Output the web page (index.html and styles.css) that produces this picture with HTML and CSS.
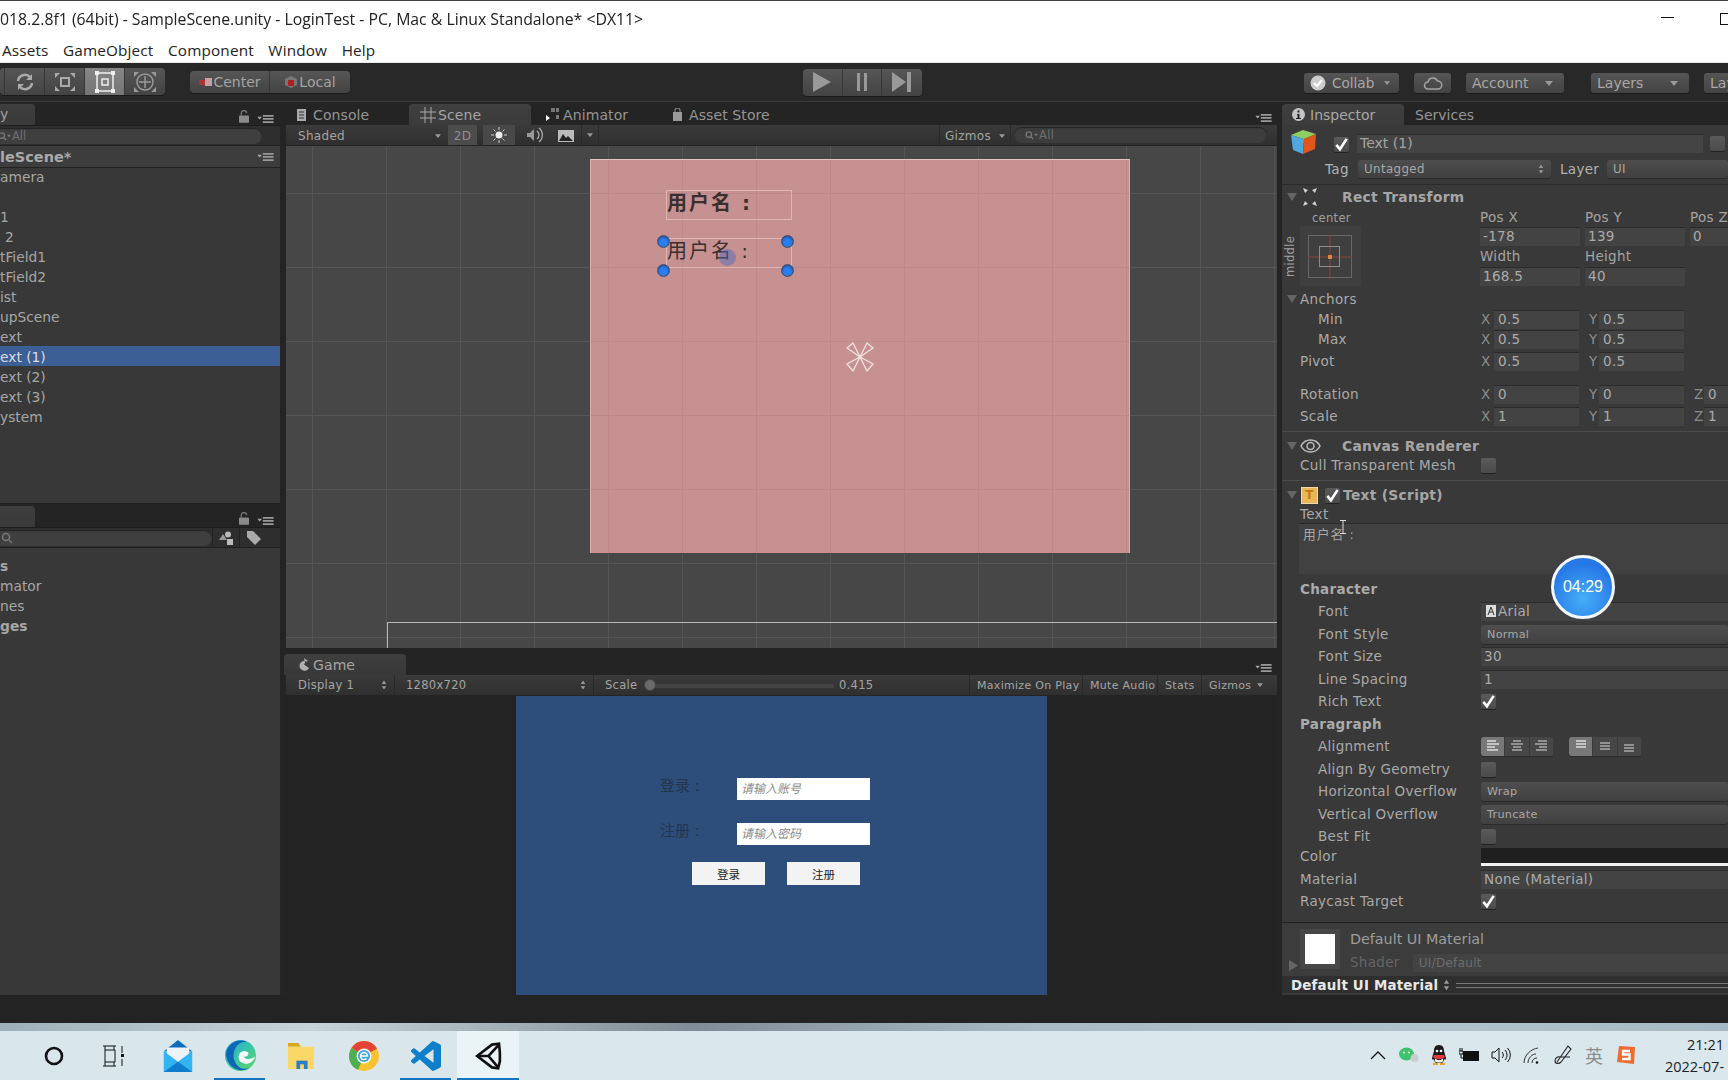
FILE: index.html
```html
<!DOCTYPE html>
<html lang="zh">
<head>
<meta charset="utf-8">
<title>Unity Editor</title>
<link rel="stylesheet" href="styles.css">
</head>
<body>
<svg class="sprite" width="0" height="0">
  <symbol id="i-menu" viewBox="0 0 18 10"><path d="M0 3h5L2.500 6z" fill="#aaa"/><path d="M6 1h12v2H6zM6 4.500h12v2H6zM6 8h12v2H6z" fill="#999"/></symbol>
  <symbol id="i-lock" viewBox="0 0 11 14"><path d="M2.500 6V3.500a3 3 0 0 1 6 0" fill="none" stroke="#777" stroke-width="1.500"/><rect y="6" width="11" height="8" rx="1" fill="#8a8a8a"/></symbol>
  <symbol id="i-check" viewBox="0 0 16 16"><path d="M2.500 8.500l3.800 4.500L13.500 2" fill="none" stroke="#fff" stroke-width="2.800"/></symbol>
  <symbol id="i-tri" viewBox="0 0 10 10"><path d="M0 1h10L5 9z" fill="#666"/></symbol>
  <symbol id="i-updown" viewBox="0 0 8 12"><path d="M4 0l3 4.500H1zM4 12L1 7.500h6z" fill="#999"/></symbol>
  <symbol id="i-down" viewBox="0 0 8 5"><path d="M0 0h8L4 5z" fill="#999"/></symbol>
  <symbol id="i-mag" viewBox="0 0 14 10"><circle cx="4" cy="4" r="3" fill="none" stroke="#777" stroke-width="1.500"/><path d="M6 6l3 3" stroke="#777" stroke-width="1.500"/><path d="M10 3h4l-2 3z" fill="#777"/></symbol>
</svg>

<header class="titlebar">
  <div class="title-row">
    <span class="title-text">018.2.8f1 (64bit) - SampleScene.unity - LoginTest - PC, Mac &amp; Linux Standalone* &lt;DX11&gt;</span>
    <span class="win-min"></span>
    <span class="win-max"></span>
  </div>
  <nav class="menu-row">
    <span class="menu-assets">Assets</span><span>GameObject</span><span>Component</span><span>Window</span><span>Help</span>
  </nav>
</header>

<div class="toolbar">
  <div class="btn-group tools">
    <span class="tool tool-stub"></span>
    <span class="tool"><svg width="22" height="22" viewBox="0 0 22 22"><path d="M4 10a7 7 0 0 1 12-4M18 12a7 7 0 0 1-12 4" fill="none" stroke="#aaa" stroke-width="2.500"/><path d="M18 3v6h-6zM4 19v-6h6z" fill="#aaa"/></svg></span>
    <span class="tool"><svg width="24" height="22" viewBox="0 0 24 22"><rect x="8" y="7" width="8" height="8" fill="none" stroke="#aaa" stroke-width="2"/><path d="M2 2h5L2 7zM22 2h-5l5 5zM2 20h5l-5-5zM22 20h-5l5-5z" fill="#aaa"/></svg></span>
    <span class="tool tool-on"><svg width="22" height="24" viewBox="0 0 22 24"><rect x="3" y="3" width="16" height="18" fill="none" stroke="#f0f0f0" stroke-width="1.500"/><rect x="8" y="9" width="6" height="6" fill="none" stroke="#eee" stroke-width="1.500"/><path d="M1 1h4v4H1zM17 1h4v4h-4zM1 19h4v4H1zM17 19h4v4h-4z" fill="#eee"/></svg></span>
    <span class="tool"><svg width="26" height="24" viewBox="0 0 26 24"><circle cx="13" cy="12" r="8" fill="none" stroke="#999" stroke-width="1.500"/><path d="M13 6v12M7 12h12" stroke="#999" stroke-width="1.500"/><path d="M2 2h5L2 7zM24 2h-5l5 5zM2 22h5l-5-5zM24 22h-5l5-5z" fill="#999"/></svg></span>
  </div>
  <div class="btn-group pivot">
    <span class="pivot-btn"><svg width="14" height="10" viewBox="0 0 14 10"><rect x="7" y="1" width="7" height="8" fill="#c4a0a0"/><rect x="1" y="3" width="6" height="5" fill="#a33"/></svg>Center</span>
    <span class="pivot-btn"><svg width="14" height="14" viewBox="0 0 14 14"><path d="M7 1l6 3v6l-6 3-6-3V4z" fill="#777"/><path d="M4 5h6v6H4z" fill="#a22"/></svg>Local</span>
  </div>
  <div class="btn-group play">
    <span class="play-btn"><svg width="18" height="20" viewBox="0 0 18 20"><path d="M0 0l18 10L0 20z" fill="#999"/></svg></span>
    <span class="play-btn"><svg width="12" height="18" viewBox="0 0 12 18"><path d="M1 0h3v18H1zM8 0h3v18H8z" fill="#999"/></svg></span>
    <span class="play-btn"><svg width="19" height="20" viewBox="0 0 19 20"><path d="M0 0l14 10L0 20z" fill="#999"/><path d="M15 0h4v20h-4z" fill="#999"/></svg></span>
  </div>
  <div class="top-right">
    <span class="tb-btn collab"><svg width="16" height="16" viewBox="0 0 16 16"><circle cx="8" cy="8" r="7.500" fill="#ccc"/><path d="M4 8l3 3 5-6" fill="none" stroke="#fff" stroke-width="2"/></svg>Collab<svg class="drop" width="6" height="4"><use href="#i-down"/></svg></span>
    <span class="tb-btn cloud"><svg width="20" height="13" viewBox="0 0 20 13"><path d="M5 12a3.500 3.500 0 0 1 0-7 5 5 0 0 1 9.500-1A4 4 0 0 1 15 12z" fill="none" stroke="#a4a4a4" stroke-width="1.500"/></svg></span>
    <span class="tb-btn account">Account<svg class="drop" width="8" height="5"><use href="#i-down"/></svg></span>
    <span class="tb-btn layers">Layers<svg class="drop" width="8" height="5"><use href="#i-down"/></svg></span>
    <span class="tb-btn layout">Layout</span>
  </div>
</div>

<main class="workspace">
  <aside class="left-col">
    <section class="hier">
      <div class="tabbar">
        <span class="tab tab-hier">y</span>
        <span class="tab-tools"><svg width="10" height="13"><use href="#i-lock"/></svg><svg width="17" height="9"><use href="#i-menu"/></svg></span>
      </div>
      <div class="search-row"><div class="search-pill"><svg class="mag" width="13" height="9"><use href="#i-mag"/></svg><span class="search-all">All</span></div></div>
      <div class="scene-head"><span>leScene*</span><svg width="17" height="9"><use href="#i-menu"/></svg></div>
      <ul class="tree hier-tree">
        <li>amera</li>
        <li></li>
        <li>1</li>
        <li class="indent">2</li>
        <li>tField1</li>
        <li>tField2</li>
        <li>ist</li>
        <li>upScene</li>
        <li>ext</li>
        <li class="selected">ext (1)</li>
        <li>ext (2)</li>
        <li>ext (3)</li>
        <li>ystem</li>
      </ul>
    </section>
    <section class="project">
      <div class="tabbar">
        <span class="tab tab-proj"></span>
        <span class="tab-tools"><svg width="10" height="13"><use href="#i-lock"/></svg><svg width="17" height="9"><use href="#i-menu"/></svg></span>
      </div>
      <div class="proj-search">
        <div class="search-pill proj-pill"><svg width="12" height="12" viewBox="0 0 12 12"><circle cx="5" cy="5" r="3.500" fill="none" stroke="#777" stroke-width="1.500"/><path d="M8 8l3 3" stroke="#777" stroke-width="1.500"/></svg></div>
        <span class="proj-icon"><svg width="15" height="14" viewBox="0 0 15 14"><path d="M0 9l4-6 4 6z" fill="#999"/><circle cx="9" cy="3.500" r="3" fill="#bbb"/><rect x="8" y="8" width="6" height="6" fill="#bbb"/></svg></span>
        <span class="proj-icon"><svg width="15" height="15" viewBox="0 0 15 15"><path d="M1 1h6l8 8-6 6-8-8z" fill="#aaa"/></svg></span>
      </div>
      <ul class="tree proj-tree">
        <li class="strong">s</li>
        <li>mator</li>
        <li>nes</li>
        <li class="strong">ges</li>
      </ul>
    </section>
  </aside>

  <div class="center-col">
    <div class="tabbar center-tabs">
      <span class="ctab ctab-console"><svg width="9" height="12" viewBox="0 0 9 12"><rect width="9" height="12" fill="#aaa"/><path d="M2 3h5M2 6h5M2 9h5" stroke="#333"/></svg>Console</span>
      <span class="ctab ctab-scene"><svg width="16" height="16" viewBox="0 0 16 16"><path d="M5 0v16M11 0v16M0 5h16M0 11h16" stroke="#aaa"/></svg>Scene</span>
      <span class="ctab ctab-anim"><svg width="13" height="13" viewBox="0 0 13 13"><path d="M5 0h4v4H5zM10 0h3v4h-3zM10 7h3v4h-3z" fill="#777"/><path d="M0 7v6l4-3z" fill="#fff"/></svg>Animator</span>
      <span class="ctab ctab-store"><svg width="9" height="13" viewBox="0 0 9 13"><path d="M2 4V2a2.500 2 0 0 1 5 0v2" fill="none" stroke="#999"/><rect y="4" width="9" height="9" fill="#999"/></svg>Asset Store</span>
      <svg class="center-menu" width="17" height="9"><use href="#i-menu"/></svg>
    </div>
    <div class="subbar scene-bar">
      <span class="sb-item shaded">Shaded<svg width="6" height="4"><use href="#i-down"/></svg></span>
      <span class="sb-item twod">2D</span>
      <span class="sb-item sun"><svg width="18" height="18" viewBox="0 0 18 18"><circle cx="9" cy="9" r="3.500" fill="#eee"/><path d="M9 1v3M9 14v3M1 9h3M14 9h3M3.500 3.500l2 2M12.500 12.500l2 2M3.500 14.500l2-2M12.500 5.500l2-2" stroke="#ccc"/></svg></span>
      <span class="sb-item sb-snd"><svg width="18" height="16" viewBox="0 0 18 16"><path d="M1 6h3l4-4v12l-4-4H1z" fill="#999"/><path d="M11 4a5 5 0 0 1 0 8M13 1a9 9 0 0 1 0 14" fill="none" stroke="#aaa" stroke-width="1.300"/></svg></span>
      <span class="sb-item"><svg width="16" height="12" viewBox="0 0 16 12"><rect width="16" height="12" fill="#bbb"/><path d="M1 11l4-7 3 4 2-2 5 5z" fill="#222"/></svg></span>
      <span class="sb-item sb-small"><svg width="6" height="4"><use href="#i-down"/></svg></span>
      <span class="sb-spacer"></span>
      <span class="sb-item sb-gizmos">Gizmos<svg width="6" height="4"><use href="#i-down"/></svg></span>
      <div class="search-pill scene-search"><svg class="mag" width="13" height="9"><use href="#i-mag"/></svg><span class="search-all">All</span></div>
    </div>

    <div class="scene-view">
      <div class="canvas-rect">
        <div class="ui-text ui-text-a">用户名 :</div>
        <div class="ui-text ui-text-b">用户名 :<i class="handle h-tl"></i><i class="handle h-tr"></i><i class="handle h-bl"></i><i class="handle h-br"></i><i class="click-dot"></i></div>
      </div>
      <svg class="canvas-icon" width="30" height="30" viewBox="0 0 30 30"><g fill="none" stroke="#efe2e0" stroke-width="1.300"><path d="M15 15L2 6l6-5zM15 15l13-9-6-5zM15 15L2 22l6 7zM15 15l13 7-6 7z"/></g></svg>
      <div class="camera-outline"></div>
    </div>

    <div class="tabbar game-tabs">
      <span class="ctab ctab-game"><svg width="11" height="13" viewBox="0 0 11 13"><path d="M8 3a5 5 0 1 0 3 7L6 6.500zM6 0l4 3-3 1z" fill="#b0b0b0"/></svg>Game</span>
      <svg class="center-menu" width="17" height="9"><use href="#i-menu"/></svg>
    </div>
    <div class="subbar game-bar">
      <span class="gb-item gb-display">Display 1<svg width="6" height="10"><use href="#i-updown"/></svg></span>
      <span class="gb-item gb-res">1280x720<svg width="6" height="10"><use href="#i-updown"/></svg></span>
      <span class="gb-item gb-scale">Scale<i class="track"></i><i class="thumb"></i><span class="gb-value">0.415</span></span>
      <span class="gb-item gb-max">Maximize On Play</span>
      <span class="gb-item gb-mute">Mute Audio</span>
      <span class="gb-item gb-stats">Stats</span>
      <span class="gb-item gb-giz">Gizmos<svg width="6" height="4"><use href="#i-down"/></svg></span>
    </div>
    <div class="game-view">
      <div class="game-side"></div>
      <div class="game-canvas">
        <div class="g-row"><span class="g-label">登录 :</span><span class="g-input">请输入账号</span></div>
        <div class="g-row"><span class="g-label">注册 :</span><span class="g-input">请输入密码</span></div>
        <div class="g-btns"><span class="g-btn">登录</span><span class="g-btn">注册</span></div>
      </div>
      <div class="game-side"></div>
    </div>
  </div>

  <aside class="inspector">
    <div class="tabbar insp-tabs">
      <span class="itab itab-active"><svg width="13" height="13" viewBox="0 0 13 13"><circle cx="6.500" cy="6.500" r="6.500" fill="#c4c4c4"/><path d="M5.500 2.500h2v2h-2zM5 6h2.500v4H9v1H4v-1h1.500V7H5z" fill="#222"/></svg>Inspector</span>
      <span class="itab">Services</span>
    </div>
    <div class="insp-body">
      <section class="go-head">
        <div class="go-row1">
          <svg class="cube" width="28" height="28" viewBox="0 0 28 28"><path d="M14 1L27 5 15 10 2 6z" fill="#8fce62"/><path d="M2 6l13 4-1 15L4 21z" fill="#4fa8e0"/><path d="M27 5l-1 15-12 5 1-15z" fill="#e0561c"/></svg>
          <span class="check check-go"><svg width="15" height="15"><use href="#i-check"/></svg></span>
          <span class="name-field">Text (1)</span>
          <span class="check check-static"></span>
        </div>
        <div class="go-row2">
          <span class="tag-label">Tag</span>
          <span class="dropdown tag-drop">Untagged<svg width="6" height="10"><use href="#i-updown"/></svg></span>
          <span class="layer-label">Layer</span>
          <span class="dropdown layer-drop">UI</span>
        </div>
      </section>

      <section class="comp comp-rect">
        <div class="comp-head"><svg class="tri" width="10" height="10"><use href="#i-tri"/></svg><svg class="comp-icon" width="20" height="20" viewBox="0 0 20 20"><path d="M3 1l5 2-3 3zM17 1l-5 2 3 3zM3 19l5-2-3-3zM17 19l-5-2 3-3z" fill="#d0d0d0"/></svg><span class="comp-title">Rect Transform</span></div>
        <div class="rect-main">
          <div class="anchor-col">
            <div class="anchor-top">center</div>
            <div class="anchor-wrap">
              <span class="anchor-side">middle</span>
              <div class="anchor-box"><svg width="46" height="46" viewBox="0 0 46 46"><rect x=".5" y=".5" width="43" height="42" fill="none" stroke="#666"/><path d="M22 0v44M0 22h44" stroke="#8a4444"/><rect x="11.500" y="11.500" width="20" height="20" fill="none" stroke="#8c8c8c"/><rect x="20" y="20" width="4" height="4" fill="#d6893d"/></svg></div>
            </div>
          </div>
          <div class="pos-grid">
            <span class="plabel">Pos X</span><span class="plabel">Pos Y</span><span class="plabel">Pos Z</span>
            <span class="field">-178</span><span class="field">139</span><span class="field">0</span>
            <span class="plabel">Width</span><span class="plabel">Height</span><span></span>
            <span class="field">168.5</span><span class="field">40</span><span></span>
          </div>
        </div>
        <div class="r r-first"><span class="lab lab0"><svg class="tri-in" width="10" height="10"><use href="#i-tri"/></svg>Anchors</span></div>
        <div class="r"><span class="lab lab1">Min</span><span class="xyz"><em>X</em><b>0.5</b><em>Y</em><b>0.5</b></span></div>
        <div class="r"><span class="lab lab1">Max</span><span class="xyz"><em>X</em><b>0.5</b><em>Y</em><b>0.5</b></span></div>
        <div class="r g2"><span class="lab lab0">Pivot</span><span class="xyz"><em>X</em><b>0.5</b><em>Y</em><b>0.5</b></span></div>
        <div class="r g13"><span class="lab lab0">Rotation</span><span class="xyz"><em>X</em><b>0</b><em>Y</em><b>0</b><em>Z</em><b>0</b></span></div>
        <div class="r g2"><span class="lab lab0">Scale</span><span class="xyz"><em>X</em><b>1</b><em>Y</em><b>1</b><em>Z</em><b>1</b></span></div>
      </section>

      <section class="comp comp-canvas">
        <div class="comp-head"><svg class="tri" width="10" height="10"><use href="#i-tri"/></svg><svg class="comp-icon" width="21" height="14" viewBox="0 0 21 14"><path d="M1 7c4-8 15-8 19 0-4 8-15 8-19 0z" fill="none" stroke="#bbb" stroke-width="1.500"/><circle cx="10.500" cy="7" r="3.500" fill="none" stroke="#bbb" stroke-width="1.500"/></svg><span class="comp-title">Canvas Renderer</span></div>
        <div class="r"><span class="lab lab0">Cull Transparent Mesh</span><span class="check"></span></div>
      </section>

      <section class="comp comp-text">
        <div class="comp-head"><svg class="tri" width="10" height="10"><use href="#i-tri"/></svg><span class="t-icon">T</span><span class="check check-t"><svg width="15" height="15"><use href="#i-check"/></svg></span><span class="comp-title comp-title-t">Text (Script)</span></div>
        <div class="r r-small"><span class="lab lab0">Text</span></div>
        <div class="textarea">用户名 :</div>
        <div class="r g5"><span class="lab lab0 strong">Character</span></div>
        <div class="r g2"><span class="lab lab1">Font</span><span class="field wide fontf"><svg width="10" height="12" viewBox="0 0 10 12"><rect width="10" height="12" fill="#ddd"/><path d="M2 10L5 2l3 8M3 7h4" stroke="#333" fill="none"/></svg>Arial</span></div>
        <div class="r g3"><span class="lab lab1">Font Style</span><span class="dropdown wide">Normal</span></div>
        <div class="r g2"><span class="lab lab1">Font Size</span><span class="field wide">30</span></div>
        <div class="r g3"><span class="lab lab1">Line Spacing</span><span class="field wide">1</span></div>
        <div class="r g2"><span class="lab lab1">Rich Text</span><span class="check"><svg width="15" height="15"><use href="#i-check"/></svg></span></div>
        <div class="r g3"><span class="lab lab0 strong">Paragraph</span></div>
        <div class="r g2"><span class="lab lab1">Alignment</span>
          <span class="align-btns">
            <span class="seg seg-on"><svg width="14" height="12" viewBox="0 0 14 12"><path d="M1 1h9M1 4h12M1 7h8M1 10h11" stroke="#ddd" stroke-width="1.500"/></svg></span><span class="seg"><svg width="14" height="12" viewBox="0 0 14 12"><path d="M3 1h8M1 4h12M3 7h8M2 10h10" stroke="#aaa" stroke-width="1.500"/></svg></span><span class="seg"><svg width="14" height="12" viewBox="0 0 14 12"><path d="M4 1h9M1 4h12M5 7h8M2 10h11" stroke="#aaa" stroke-width="1.500"/></svg></span>
          </span>
          <span class="align-btns align-second">
            <span class="seg seg-on"><svg width="14" height="12" viewBox="0 0 14 12"><path d="M2 1h10M2 4h10M2 7h10" stroke="#ddd" stroke-width="1.500"/></svg></span><span class="seg"><svg width="14" height="12" viewBox="0 0 14 12"><path d="M2 3h10M2 6h10M2 9h10" stroke="#aaa" stroke-width="1.500"/></svg></span><span class="seg"><svg width="14" height="12" viewBox="0 0 14 12"><path d="M2 5h10M2 8h10M2 11h10" stroke="#aaa" stroke-width="1.500"/></svg></span>
          </span>
        </div>
        <div class="r g3"><span class="lab lab1">Align By Geometry</span><span class="check"></span></div>
        <div class="r g2"><span class="lab lab1">Horizontal Overflow</span><span class="dropdown wide">Wrap</span></div>
        <div class="r g3"><span class="lab lab1">Vertical Overflow</span><span class="dropdown wide">Truncate</span></div>
        <div class="r g2"><span class="lab lab1">Best Fit</span><span class="check"></span></div>
        <div class="r"><span class="lab lab0">Color</span><span class="color-field"></span></div>
        <div class="r g3"><span class="lab lab0">Material</span><span class="field wide mat">None (Material)</span></div>
        <div class="r g2"><span class="lab lab0">Raycast Target</span><span class="check"><svg width="15" height="15"><use href="#i-check"/></svg></span></div>
      </section>

      <section class="mat-section">
        <svg class="mat-tri" width="9" height="11" viewBox="0 0 9 11"><path d="M0 0l9 5.500L0 11z" fill="#666"/></svg>
        <div class="swatch"><i></i></div>
        <div class="mat-info">
          <div class="mat-title">Default UI Material</div>
          <div class="mat-shader"><span>Shader</span><span class="shader-drop">UI/Default</span></div>
        </div>
      </section>
      <div class="mat-bar"><span>Default UI Material</span><svg width="7" height="12"><use href="#i-updown"/></svg><i class="mat-lines"></i></div>
    </div>
  </aside>
</main>

<div class="statusbar"></div>
<div class="desk-strip"></div>

<footer class="taskbar">
  <div class="task-left">
    <span class="task-stub"></span>
    <span class="tb-app app-narrow"><svg width="20" height="20" viewBox="0 0 20 20"><circle cx="10" cy="10" r="8" fill="none" stroke="#111" stroke-width="2.600"/></svg></span>
    <span class="tb-app app-narrow"><svg width="22" height="22" viewBox="0 0 22 22"><path d="M0 1h13M0 21h13M2 5h10v12H2zM2 1v4M11 1v4M2 17v4M11 17v4M19 1v7M19 14v7" fill="none" stroke="#111"/><rect x="18" y="9" width="3" height="3" fill="#111"/></svg></span>
    <span class="tb-app app-mail"><svg width="30" height="32" viewBox="0 0 30 34"><path d="M15 0L30 12H0z" fill="#0f6cbd"/><path d="M0 12h30v22H0z" fill="#2ab0f0"/><path d="M3 8h24v10L15 24 3 18z" fill="#eef3f7"/><path d="M0 12l15 11 15-11v22H0z" fill="#31b4ef"/><path d="M0 34l15-11 15 11z" fill="#0f7ccc"/></svg></span>
    <span class="tb-app app-open"><svg width="31" height="33" viewBox="0 0 32 34"><defs><linearGradient id="edge" x1="0" y1="0" x2="1" y2="1"><stop offset="0" stop-color="#2b9fd8"/><stop offset=".5" stop-color="#37c6a8"/><stop offset="1" stop-color="#65d55f"/></linearGradient></defs><circle cx="16" cy="17" r="16" fill="url(#edge)"/><path d="M1 15C3 4 14-1 23 3 14 2 8 10 9 19c1 8 8 14 16 11-9 6-23 0-24-15z" fill="#0d66b5"/><path d="M14 19a6 6 0 0 1 10-5c1 3-2 5-5 4 3 4 8 3 12 0-1 5-7 9-12 7-3-1-5-3-5-6z" fill="#f2f8f8"/></svg></span>
    <span class="tb-app"><svg width="28" height="26" viewBox="0 0 30 28"><path d="M0 0h11l3 4H0z" fill="#d8a81a"/><rect y="4" width="28" height="24" fill="#fbd768"/><path d="M9 19h12v9H9z" fill="#2a7fc8"/><path d="M13 23h4v5h-4z" fill="#fbd768"/></svg></span>
    <span class="tb-app"><svg width="30" height="32" viewBox="0 0 30 32"><circle cx="15" cy="16" r="15" fill="#f9c22e"/><path d="M15 1a15 15 0 0 1 13 7.500L15 16 2.500 8A15 15 0 0 1 15 1z" fill="#e54335"/><path d="M2.500 8L15 16 9 30A15 15 0 0 1 2.500 8z" fill="#4caf50"/><circle cx="15" cy="16" r="7.500" fill="#fff"/><circle cx="15" cy="16" r="6" fill="#3aa6dd"/><path d="M11.500 16h7a3.500 3.500 0 1 0-1 2.500" fill="none" stroke="#fff" stroke-width="1.500"/></svg></span>
    <span class="tb-app app-open app-vs"><svg width="30" height="34" viewBox="0 0 24 24"><path fill="#0f7fcc" d="M23.150 2.587L18.210.21a1.494 1.494 0 0 0-1.705.29l-9.460 8.630-4.120-3.128a.999.999 0 0 0-1.276.057L.327 7.261A1 1 0 0 0 .326 8.740L3.899 12 .326 15.260a1 1 0 0 0 .001 1.479L1.650 17.940a.999.999 0 0 0 1.276.057l4.120-3.128 9.460 8.630a1.492 1.492 0 0 0 1.704.29l4.942-2.377A1.500 1.500 0 0 0 24 20.060V3.939a1.500 1.500 0 0 0-.85-1.352zm-5.146 14.861L10.826 12l7.178-5.448v10.896z"/></svg></span>
    <span class="tb-app app-active"><svg width="27" height="28" viewBox="0 0 30 32"><path d="M2 16L19 3l8-1 1 10v10l-2 8-7-1z" fill="none" stroke="#111" stroke-width="3"/><path d="M2 16h13l12-13M15 16l11 13" fill="none" stroke="#111" stroke-width="3"/></svg></span>
  </div>
  <div class="tray">
    <svg class="tray-chev" width="16" height="10" viewBox="0 0 16 10"><path d="M1 9l7-7 7 7" fill="none" stroke="#111" stroke-width="1.300"/></svg>
    <svg class="tray-wx" width="20" height="16" viewBox="0 0 20 16"><ellipse cx="7.500" cy="7" rx="7.500" ry="6.500" fill="#3cc46c"/><circle cx="5" cy="5.500" r="1" fill="#fff"/><circle cx="10" cy="5.500" r="1" fill="#fff"/><circle cx="15.500" cy="11" r="4" fill="#ccc"/></svg>
    <svg class="tray-qq" width="16" height="20" viewBox="0 0 16 20"><path d="M8 0c4 0 5 3 5 6l2 7c0 2-1 2-2 1 0 2-1 3-2 4H5c-1-1-2-2-2-4-1 1-2 1-2-1l2-7c0-3 1-6 5-6z" fill="#1b1b1b"/><path d="M4 13c2 3 6 3 8 0v3c-1 2-7 2-8 0z" fill="#fff"/><path d="M3 10h10l1 2c-3 3-9 3-12 0z" fill="#e23b3b"/><path d="M2 18h5v2H2zM9 18h5v2H9z" fill="#e9a32a"/><circle cx="6" cy="6" r="1.300" fill="#fff"/><circle cx="10" cy="6" r="1.300" fill="#fff"/></svg>
    <svg class="tray-bat" width="20" height="14" viewBox="0 0 20 14"><path d="M1 0v3M3 0v3M0 3h4v3H0zM2 6v4h2" stroke="#111" fill="none"/><rect x="4.500" y="3.500" width="15" height="9" fill="#111" stroke="#111"/></svg>
    <svg class="tray-snd" width="20" height="16" viewBox="0 0 20 16"><path d="M1 5h3l4-4v14l-4-4H1z" fill="none" stroke="#111"/><path d="M11 5a4 4 0 0 1 0 6M14 3a7 7 0 0 1 0 10M16.500 1a10 10 0 0 1 0 14" fill="none" stroke="#111"/></svg>
    <svg class="tray-wifi" width="16" height="17" viewBox="0 0 16 17"><path d="M1 16C1 8 8 2 15 1M5 16c0-5 4-9 8-9M9 16c0-3 2-5 5-5" fill="none" stroke="#333"/><circle cx="14" cy="15.500" r="1.300" fill="#111"/></svg>
    <svg class="tray-pen" width="20" height="20" viewBox="0 0 20 20"><path d="M4 17L15 1l3 3-10 13c-2 2-6 2-6-1s3-5 5-4l10 0" fill="none" stroke="#222" stroke-width="1.100"/></svg>
    <span class="tray-ime">英</span>
    <svg class="tray-sg" width="20" height="20" viewBox="0 0 20 20"><path d="M3 1l16 1-1 17-17-2z" fill="#ee6a2e"/><path d="M14 6H7v3.500h6.500V14H6" fill="none" stroke="#fff" stroke-width="2.400"/></svg>
    <div class="clock"><span>21:21</span><span>2022-07-</span></div>
  </div>
</footer>

<div class="timer">04:29</div>
<svg class="ibeam" width="8" height="14" viewBox="0 0 8 14"><path d="M1 .5h6M4 .5v13M1 13.500h6" stroke="#ddd" stroke-width="1" fill="none"/></svg>
</body>
</html>
```

FILE: styles.css
```css
* { box-sizing: border-box; }
html, body { margin: 0; padding: 0; }
body {
  width: 1728px; height: 1080px; overflow: hidden; position: relative;
  display: flex; flex-direction: column; background: #242424;
  font-family: "DejaVu Sans", "Noto Sans CJK SC", sans-serif; font-size: 13.5px; color: #b2b2b2;
  filter: blur(.3px);
}
.sprite { position: absolute; }
ul { list-style: none; margin: 0; padding: 0; }
svg { flex: none; display: block; }
em, b { font-style: normal; font-weight: normal; }

/* window chrome */
.titlebar { height: 63px; background: #fff; border-top: 1px solid #444; color: #222; font-family: "Open Sans", "Noto Sans", sans-serif; border-bottom: 1px solid #e8e8e8; flex: none; }
.title-row { height: 36px; display: flex; align-items: center; font-size: 15.8px; position: relative; white-space: nowrap; }
.win-min { position: absolute; left: 1661px; top: 16px; width: 13px; height: 1px; background: #111; }
.win-max { position: absolute; left: 1720px; top: 12px; width: 12px; height: 12px; border: 1px solid #111; }
.menu-row { height: 25px; display: flex; align-items: center; font-size: 15.3px; gap: 14.6px; padding-left: 2px; letter-spacing: .15px; }

/* main toolbar */
.toolbar { height: 39px; flex: none; background: #282828; border-bottom: 1px solid #3a3a3a; display: flex; align-items: center; position: relative; }
.btn-group { display: flex; border-radius: 4px; background: linear-gradient(#565656, #434343); box-shadow: 0 1px 0 #1b1b1b; }
.tools { height: 27px; margin-bottom: 1px; }
.tool { width: 40px; display: flex; align-items: center; justify-content: center; border-right: 1px solid #363636; }
.tool:last-child { border-right: 0; }
.tool-stub { width: 5px; }
.tool-on { background: linear-gradient(#868686, #757575); }
.pivot { margin-left: 25px; height: 22px; }
.pivot-btn { width: 80px; display: flex; align-items: center; justify-content: center; gap: 1px; color: #a4a4a4; font-size: 14px; border-right: 1px solid #383838; }
.pivot-btn:last-child { border-right: 0; }
.play { margin-left: 453px; height: 27px; }
.play-btn { width: 39.500px; display: flex; align-items: center; justify-content: center; border-right: 1px solid #383838; }
.play-btn:last-child { border-right: 0; }
.top-right { position: absolute; left: 1304px; top: 10px; display: flex; height: 20px; }
.tb-btn { display: flex; align-items: center; height: 20px; border-radius: 3px; background: linear-gradient(#555, #434343); box-shadow: 0 1px 0 #1b1b1b; font-size: 14px; color: #a8a8a8; position: relative; padding-left: 6px; }
.collab { width: 95px; gap: 6px; font-size: 13.6px; }
.collab .drop { position: absolute; right: 9px; top: 8px; }
.cloud { width: 37px; margin-left: 15px; justify-content: center; padding: 0; }
.account { width: 98px; margin-left: 15px; }
.layers { width: 98px; margin-left: 27px; }
.layout { width: 60px; margin-left: 15px; }
.drop { position: absolute; right: 11px; top: 8px; }

/* workspace */
.workspace { flex: none; height: 893px; display: flex; background: #242424; }
.left-col { width: 280px; flex: none; display: flex; flex-direction: column; margin-right: 4px; }
.tabbar { height: 23px; flex: none; background: #242424; display: flex; align-items: flex-end; position: relative; color: #a0a0a0; }
.hier { height: 402px; background: #383838; border-bottom: 1px solid #202020; }
.tab { display: block; height: 21px; background: linear-gradient(#3e3e3e, #3a3a3a); border-radius: 0 4px 0 0; font-size: 14px; line-height: 20px; }
.tab-hier { width: 35px; color: #a0a0a0; }
.tab-proj { width: 35px; }
.tab-tools { position: absolute; right: 6px; bottom: 2px; display: flex; align-items: flex-end; gap: 8px; }
.search-row { height: 20px; background: #2e2e2e; border-top: 1px solid #1d1d1d; padding-top: 2px; }
.search-pill { height: 16px; width: 262px; background: #3f3f3f; border-radius: 0 9px 9px 0; box-shadow: inset 0 1px 1px #222; font-size: 11.500px; color: #6f6f6f; line-height: 15px; display: flex; align-items: center; }
.search-all { padding-left: 0; }
.mag { margin: 0 1px 0 0; }
.search-row .mag { margin-left: -2px; }
.scene-head { height: 23px; background: #3d3d3d; border-top: 1px solid #222; border-bottom: 1px solid #222; display: flex; align-items: center; justify-content: space-between; padding-right: 6px; font-size: 14.5px; font-weight: 600; color: #aaa; }
.tree li { height: 20px; line-height: 22px; white-space: nowrap; color: #a6a6a6; font-size: 13.800px; }
.hier-tree { margin-top: -2px; }
.tree .indent { padding-left: 5px; }
.tree .selected { background: #3c5f96; color: #dcdcdc; }
.project { flex: 1; background: #383838; min-height: 0; }
.proj-search { height: 21px; background: #2e2e2e; border-top: 1px solid #1d1d1d; border-bottom: 1px solid #1e1e1e; display: flex; align-items: center; }
.proj-pill { width: 212px; height: 16px; padding-left: 1px; }
.proj-icon { width: 27px; height: 20px; display: flex; align-items: center; justify-content: center; border-left: 1px solid #232323; }
.proj-tree { padding-top: 7px; }
.strong { font-weight: 700; }

/* center */
.center-col { width: 998px; flex: none; display: flex; flex-direction: column; padding-right: 5px; }
.ctab { height: 21px; display: flex; align-items: center; font-size: 14px; letter-spacing: .1px; color: #959595; position: relative; }
.ctab svg { margin-right: 4px; }
.ctab-console { width: 125px; padding-left: 13px; }
.ctab-console svg { margin-right: 7px; }
.ctab-scene { width: 122px; padding-left: 11px; background: linear-gradient(#3f3f3f, #3b3b3b); border-radius: 4px 4px 0 0; color: #a4a4a4; }
.ctab-scene svg { margin-right: 2px; }
.ctab-anim { width: 142px; padding-left: 15px; }
.ctab-store svg { margin-right: 7px; }
.center-menu { position: absolute; right: 5px; bottom: 3px; }
.subbar { height: 21px; flex: none; margin-left: 2px; background: linear-gradient(#3a3a3a, #2f2f2f); border-bottom: 1px solid #242424; display: flex; align-items: stretch; font-size: 12px; color: #a4a4a4; letter-spacing: .3px; }
.sb-item { display: flex; align-items: center; justify-content: center; padding: 1px 7px 0; }
.shaded { width: 162px; justify-content: space-between; padding: 1px 7px 0 12px; }
.twod { width: 29px; padding: 1px 0 0; background: #4c4c4c; color: #8f8f8f; }
.sun { width: 32px; padding: 0; background: #484848; margin-left: 6px; }
.sb-snd { padding: 0 7px 0 11px; }
.sb-small { padding: 0 5px; border-left: 1px solid #2a2a2a; border-right: 1px solid #2a2a2a; }
.sb-spacer { flex: 1; }
.sb-gizmos { gap: 8px; width: 72px; border-left: 1px solid #2a2a2a; border-right: 1px solid #2a2a2a; padding: 1px 6px 0 5px; justify-content: flex-start; }
.scene-search { width: 253px; margin: 2px 10px 0 3px; border-radius: 9px; background: #3d3d3d; padding-left: 11px; }

.scene-view {
  height: 502px; flex: none; margin-left: 2px; position: relative; overflow: hidden; background-color: #474747;
  background-image: linear-gradient(90deg, #555 1px, transparent 1px), linear-gradient(#555 1px, transparent 1px);
  background-size: 74px 74px; background-position: 26px 47px;
}
.canvas-rect {
  position: absolute; left: 304px; top: 13px; width: 540px; height: 394px; background-color: #c89191;
  background-image: linear-gradient(90deg, #bc8888 1px, transparent 1px), linear-gradient(#bc8888 1px, transparent 1px);
  background-size: 74px 74px; background-position: 17px 33px; border-top: 1px solid #e4c4c0; border-left: 1px solid #d8b0ac; border-right: 1px solid #d8b0ac;
}
.ui-text { position: absolute; left: 75px; width: 126px; height: 30px; border: 1px solid #e0b6b2; color: #3a2f2f; font-size: 20px; line-height: 24px; letter-spacing: 2px; padding-left: 0; white-space: pre; }
.ui-text-a { top: 30px; font-weight: 700; }
.ui-text-b { top: 78px; }
.handle { position: absolute; width: 13px; height: 13px; border-radius: 50%; background: radial-gradient(circle at 50% 60%, #2a7ff0 40%, #2a5aa8 70%); border: 1px solid #3f4f6b; }
.h-tl { left: -10px; top: -4px; } .h-tr { right: -3px; top: -4px; } .h-bl { left: -10px; bottom: -10px; } .h-br { right: -3px; bottom: -10px; }
.click-dot { position: absolute; left: 52px; top: 10px; width: 17px; height: 17px; border-radius: 50%; background: rgba(70, 105, 190, .45); }
.canvas-icon { position: absolute; left: 559px; top: 196px; }
.camera-outline { position: absolute; left: 101px; top: 476px; width: 1000px; height: 40px; border: 1px solid #b8b8b8; }

.game-tabs { height: 27px; }
.ctab-game { width: 122px; padding-left: 14px; background: linear-gradient(#3f3f3f, #383838); border-radius: 4px 4px 0 0; color: #a4a4a4; }
.game-bar { font-size: 11.500px; }
.gb-item { display: flex; align-items: center; padding: 0 7px; border-right: 1px solid #282828; white-space: nowrap; }
.gb-display { width: 109px; padding-left: 12px; justify-content: space-between; }
.gb-res { width: 199px; padding-left: 11px; justify-content: space-between; }
.gb-scale { width: 376px; position: relative; padding-left: 11px; }
.thumb { position: absolute; left: 50px; top: 4px; width: 12px; height: 12px; border-radius: 50%; background: #6a6a6a; border: 1px solid #444; }
.track { position: absolute; left: 58px; top: 9px; width: 182px; height: 4px; background: #444; border-radius: 2px; }
.gb-value { position: absolute; left: 245px; }
.gb-max { width: 113px; font-size: 11px; letter-spacing: .3px; }
.gb-mute { width: 75px; font-size: 11px; letter-spacing: .3px; }
.gb-stats { width: 44px; font-size: 11px; letter-spacing: .3px; }
.gb-giz { gap: 6px; border-right: 0; padding-left: 7px; font-size: 11px; letter-spacing: .3px; }
.game-view { flex: 1; display: flex; margin-left: 2px; }
.game-side { background: #232323; flex: 1; }
.game-canvas { width: 531px; flex: none; background: #2d4d7b; padding: 82px 0 0 144px; font-size: 15px; }
.g-row { display: flex; align-items: center; height: 22px; margin-bottom: 23px; }
.g-label { width: 77px; color: #26344c; font-size: 15px; margin-top: -9px; }
.g-input { width: 133px; height: 22px; background: #fff; color: #8b8b8b; font-size: 12px; font-style: italic; padding-left: 4px; line-height: 22px; }
.g-btns { display: flex; gap: 22px; margin: -6px 0 0 32px; }
.g-btn { width: 73px; height: 23px; background: #f3f3f3; color: #222; font-size: 11.500px; display: flex; align-items: center; justify-content: center; }

/* inspector */
.inspector { flex: 1; min-width: 0; display: flex; flex-direction: column; }
.insp-tabs { font-size: 14px; }
.itab { height: 21px; display: flex; align-items: center; gap: 5px; padding-left: 11px; color: #959595; }
.itab-active { width: 122px; background: linear-gradient(#3f3f3f, #3b3b3b); border-radius: 4px 4px 0 0; color: #a8a8a8; padding-left: 10px; }
.insp-body { flex: 1; background: #393939; overflow: hidden; font-size: 13.500px; letter-spacing: .3px; }
.go-head { height: 60px; border-bottom: 1px solid #2a2a2a; padding-top: 9px; }
.go-row1 { height: 19px; display: flex; align-items: center; position: relative; }
.cube { position: absolute; left: 7px; top: -5px; }
.check { width: 15px; height: 15px; flex: none; border-radius: 2px; background: linear-gradient(#5a5a5a, #4b4b4b); box-shadow: 0 1px 0 #222; display: flex; align-items: center; justify-content: center; }
.check-go { margin-left: 52px; margin-top: 2px; }
.name-field { margin-left: 8px; width: 346px; height: 19px; background: #444; box-shadow: inset 0 1px 0 #2b2b2b; padding-left: 3px; font-size: 14px; line-height: 19px; color: #a4a4a4; letter-spacing: 0; }
.check-static { margin-left: 7px; }
.go-row2 { margin-top: 7px; height: 18px; display: flex; align-items: center; }
.tag-label { margin-left: 43px; width: 33px; }
.dropdown { display: flex; align-items: center; justify-content: space-between; height: 18px; border-radius: 3px; background: linear-gradient(#4e4e4e, #404040); box-shadow: 0 1px 0 #2a2a2a; font-size: 11.800px; padding: 0 7px 0 6px; color: #a8a8a8; letter-spacing: .4px; }
.tag-drop { width: 193px; }
.layer-label { margin-left: 9px; width: 47px; }
.layer-drop { flex: 1; }
.comp-rect { height: 247px; border-bottom: 1px solid #4c4c4c; padding-top: 1px; }
.comp-canvas { height: 49px; border-bottom: 1px solid #4c4c4c; padding-top: 4px; }
.comp-canvas .comp-head { height: 19px; }
.comp-text { height: 442px; border-bottom: 1px solid #222; padding-top: 4px; }
.comp-text .comp-head { height: 20px; }
.comp-head { height: 22px; display: flex; align-items: center; position: relative; }
.tri { margin-left: 5px; }
.comp-icon { position: absolute; left: 18px; }
.comp-title { margin-left: 45px; font-weight: 700; color: #a6a6a6; font-size: 13.800px; letter-spacing: .3px; }
.comp-title-t { margin-left: 3px; }
.t-icon { margin-left: 4px; width: 17px; height: 17px; background: #e7b75a; border: 1px solid #f0d9a8; color: #c07a10; font-size: 12px; font-weight: 700; text-align: center; line-height: 15px; }
.check-t { margin-left: 7px; }
.rect-main { height: 80px; display: flex; }
.anchor-col { width: 198px; flex: none; padding-left: 18px; position: relative; }
.anchor-top { font-size: 11.500px; height: 18px; padding-left: 12px; line-height: 20px; color: #a0a0a0; }
.anchor-wrap { display: flex; }
.anchor-side { writing-mode: vertical-rl; transform: rotate(180deg); font-size: 11.500px; height: 60px; text-align: center; position: absolute; left: 1px; color: #a0a0a0; }
.anchor-box { width: 61px; height: 60px; background: #3f3f3f; padding: 9px 8px 8px; }
.pos-grid { display: grid; grid-template-columns: 100px 100px 40px; column-gap: 5px; grid-template-rows: 19px 19px 21px 19px; flex: 1; }
.plabel { font-size: 13.500px; line-height: 17px; color: #a4a4a4; align-self: center; }
.field { background: #434343; box-shadow: inset 0 1px 0 #2b2b2b; font-size: 13.500px; line-height: 19px; padding-left: 3px; color: #ababab; display: block; }
.r { height: 20px; display: flex; align-items: center; position: relative; }
.r-first { margin-top: 1px; }
.r-small { height: 17px; }
.g2 { margin-top: 2px; } .g3 { margin-top: 3px; } .g5 { margin-top: 5px; } .g13 { margin-top: 13px; }
.lab { flex: none; width: 199px; color: #a9a9a9; white-space: nowrap; }
.lab0 { padding-left: 18px; }
.lab1 { padding-left: 36px; }
.tri-in { position: absolute; left: 5px; top: 5px; }
.strong.lab { color: #aaa; font-weight: 700; }
.xyz { display: grid; grid-template-columns: 13px 85px 20px 85px 20px 1fr; flex: 1; height: 19px; align-items: stretch; font-size: 13.500px; }
.xyz em { color: #8d8d8d; line-height: 19px; }
.xyz em:not(:first-child) { padding-left: 10px; }
.xyz b { background: #434343; box-shadow: inset 0 1px 0 #2b2b2b; padding-left: 4px; line-height: 19px; color: #ababab; }
.wide { flex: 1; height: 19px; }
.dropdown.wide { font-size: 11.200px; letter-spacing: .3px; }
.fontf { display: flex; align-items: center; gap: 2px; padding-left: 5px; }
.textarea { height: 51px; margin: 1px 0 0 17px; background: #414141; box-shadow: inset 0 1px 0 #2a2a2a; padding: 4px 0 0 4px; font-size: 12.800px; line-height: 16px; color: #a8a8a8; letter-spacing: 1px; white-space: pre; }
.align-btns { display: flex; height: 19px; width: 73px; border-radius: 3px; background: #474747; box-shadow: 0 1px 0 #2a2a2a; }
.align-second { margin-left: 15px; }
.seg { flex: 1; display: flex; align-items: center; justify-content: center; border-right: 1px solid #3a3a3a; }
.seg-on { background: #787878; border-radius: 3px 0 0 3px; }
.color-field { flex: 1; height: 18px; background: #1f1f1f; border-bottom: 3px solid #eee; margin-top: 2px; }
.mat { padding-left: 3px; line-height: 18px; }
.mat-section { height: 53px; background: #3c3c3c; display: flex; position: relative; padding: 6px 0 0 18px; overflow: hidden; }
.mat-tri { position: absolute; left: 7px; top: 37px; }
.swatch { width: 40px; height: 40px; background: #474747; padding: 5px; flex: none; }
.swatch i { display: block; width: 30px; height: 30px; background: #fff; }
.mat-info { flex: 1; margin-left: 10px; min-width: 0; }
.mat-title { font-size: 14.300px; line-height: 20px; color: #9c9c9c; letter-spacing: 0; }
.mat-shader { display: flex; margin-top: 5px; font-size: 13.500px; color: #656565; height: 18px; }
.shader-drop { flex: 1; margin-left: 13px; height: 18px; font-size: 12px; padding-left: 6px; background: #434343; border-radius: 3px 0 0 0; line-height: 18px; color: #6c6c6c; }
.mat-bar { height: 17px; background: #2f2f2f; display: flex; align-items: center; padding: 1px 0 0 9px; gap: 5px; font-size: 13.400px; font-weight: 700; color: #e8e8e8; letter-spacing: .2px; }
.mat-lines { flex: 1; height: 5px; border-top: 1px solid #777; border-bottom: 1px solid #777; margin-left: 1px; }

/* desktop */
.statusbar { height: 28px; flex: none; background: #232323; }
.desk-strip { height: 8px; flex: none; background: linear-gradient(90deg, #9eb0b8, #c6d3d9 18%, #7f8e96 40%, #aabac2 60%, #b0c3cc 85%, #a5b9c4); }
.taskbar { height: 50px; flex: none; background: linear-gradient(90deg, #d9e7ed, #dae8ee); display: flex; justify-content: space-between; position: relative; }
.task-left { display: flex; }
.task-stub { width: 24px; }
.tb-app { width: 62px; height: 50px; display: flex; align-items: center; justify-content: center; position: relative; padding-bottom: 1px; }
.app-narrow { width: 60px; }
.app-mail { margin-left: 3px; }
.app-open::after { content: ""; position: absolute; left: 5px; right: 6px; bottom: 0; height: 3px; background: #1474bf; }
.app-active { background: #eaf3f6; }
.app-active::after { content: ""; position: absolute; left: 0; right: 0; bottom: 0; height: 3px; background: #1474bf; }
.tray { display: flex; align-items: center; width: 358px; padding-bottom: 2px; position: relative; }
.tray-wx { margin-left: 13px; }
.tray-qq { margin-left: 12px; }
.tray-bat { margin-left: 12px; }
.tray-snd { margin-left: 12px; }
.tray-wifi { margin-left: 12px; }
.tray-pen { margin-left: 14px; }
.tray-ime { margin-left: 12px; font-size: 18px; color: #8c8c8c; font-family: "Noto Sans CJK SC", sans-serif; }
.tray-sg { margin-left: 13px; }
.clock { position: absolute; left: 295px; top: 3px; display: flex; flex-direction: column; align-items: flex-start; width: 63px; font-family: "Open Sans", sans-serif; font-size: 14.500px; line-height: 22px; color: #222; white-space: nowrap; }
.clock span:first-child { padding-left: 22px; }

/* overlays */
.timer { position: absolute; left: 1551px; top: 555px; width: 64px; height: 64px; border-radius: 50%; border: 3px solid #f2f8fc; background: radial-gradient(circle at 50% 70%, #46aef8, #2678e6 70%); color: #fff; font-family: "Liberation Sans", sans-serif; font-size: 16px; display: flex; align-items: center; justify-content: center; }
.ibeam { position: absolute; left: 1339px; top: 520px; }
```
